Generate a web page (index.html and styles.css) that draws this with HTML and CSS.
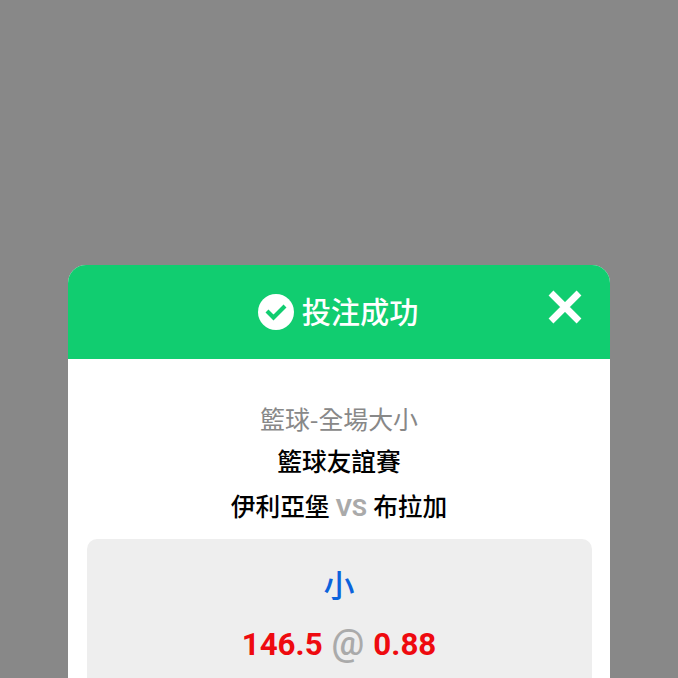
FILE: index.html
```
<!DOCTYPE html>
<html lang="zh-Hant">
<head>
<meta charset="utf-8">
<title>投注成功</title>
<link rel="stylesheet" href="styles.css">
</head>
<body>
<main class="dialog">
<header class="header">
<svg class="check" viewBox="0 0 36 36"><circle cx="18" cy="18" r="18" fill="#fff"/><path d="M9 17l6.5 6.5L27 12" fill="none" stroke="#11cd70" stroke-width="4.2"/></svg>
<h1 class="title">投注成功</h1>
<svg class="close" viewBox="0 0 34 34"><path d="M3 3l28 28M31 3L3 31" stroke="#fff" stroke-width="6.8"/></svg>
</header>
<section class="body">
<p class="market">籃球-全場大小</p>
<p class="league">籃球友誼賽</p>
<p class="teams">伊利亞堡 <span class="vs">VS</span> 布拉加</p>
<div class="bet">
<p class="pick">小</p>
<p class="odds"><span>146.5</span><span class="at">@</span><span>0.88</span></p>
</div>
</section>
</main>
</body>
</html>
```
FILE: styles.css
```
* { box-sizing: border-box; }
body { margin: 0; height: 678px; padding: 265px 68px 0; overflow: hidden; background: #888; font-family: Roboto, "Noto Sans CJK TC", sans-serif; }
p, h1 { margin: 0; }
.dialog { height: 413px; background: #fff; border-radius: 18px 18px 0 0; }
.header { position: relative; display: flex; justify-content: center; gap: 8px; height: 94px; padding: 29px 2px 0 0; background: #11cd70; color: #fff; border-radius: 18px 18px 0 0; }
.check { width: 36px; height: 36px; }
.title { font-size: 29.2px; font-weight: 500; line-height: 39px; }
.close { position: absolute; top: 25px; right: 28px; width: 34px; height: 34px; }
.body { padding: 40px 18px 0; text-align: center; }
.market { font-family: "Noto Sans CJK TC", sans-serif; font-size: 24.9px; line-height: 38px; color: #888; }
.league, .teams { font-size: 24.7px; font-weight: 500; line-height: 43px; color: #000; }
.league { margin-top: 4px; }
.teams { line-height: 47px; }
.vs { color: #aaa; font-weight: 700; }
.bet { height: 150px; margin: 8px 0.5px 0; padding-top: 21px; border-radius: 10px; background: #eee; }
.pick { color: #0b63dc; font-size: 31px; font-weight: 500; line-height: 54px; }
.odds { display: flex; justify-content: center; align-items: baseline; gap: 9px; color: #ee0a0f; font-size: 31.3px; font-weight: 700; line-height: 61px; }
.at { color: #aaa; font-size: 36.5px; font-weight: 500; line-height: 56px; }
```
